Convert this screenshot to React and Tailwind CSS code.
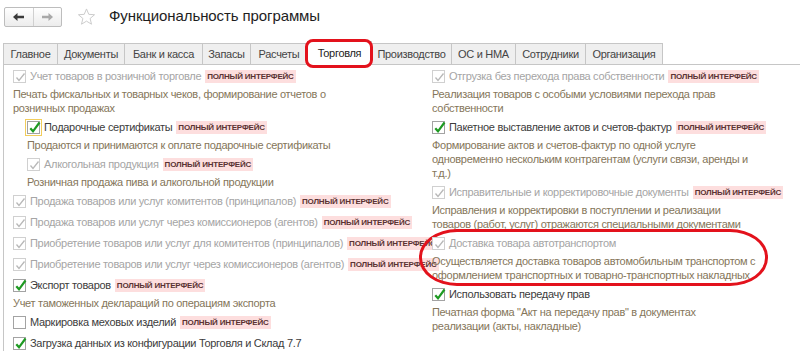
import React from "react";

const tabs = [
  { title: "Главное", w: 55 },
  { title: "Документы", w: 68 },
  { title: "Банк и касса", w: 79 },
  { title: "Запасы", w: 49 },
  { title: "Расчеты", w: 58 },
  { title: "Торговля", w: 65, active: true },
  { title: "Производство", w: 81 },
  { title: "ОС и НМА", w: 65 },
  { title: "Сотрудники", w: 71 },
  { title: "Организация", w: 78 },
];

// state: "disabled" | "on" | "off" | "focus"
const leftItems = [
  { state: "disabled", label: "Учет товаров в розничной торговле", badge: true, desc: "Печать фискальных и товарных чеков, формирование отчетов о розничных продажах" },
  { state: "focus", label: "Подарочные сертификаты", badge: true, indent: true, desc: "Продаются и принимаются к оплате подарочные сертификаты" },
  { state: "disabled", label: "Алкогольная продукция", badge: true, indent: true, desc: "Розничная продажа пива и алкогольной продукции" },
  { state: "disabled", label: "Продажа товаров или услуг комитентов (принципалов)", badge: true },
  { state: "disabled", label: "Продажа товаров или услуг через комиссионеров (агентов)", badge: true },
  { state: "disabled", label: "Приобретение товаров или услуг для комитентов (принципалов)", badge: true },
  { state: "disabled", label: "Приобретение товаров или услуг через комиссионеров (агентов)", badge: true },
  { state: "on", label: "Экспорт товаров", badge: true, desc: "Учет таможенных деклараций по операциям экспорта" },
  { state: "off", label: "Маркировка меховых изделий", badge: true },
  { state: "on", label: "Загрузка данных из конфигурации Торговля и Склад 7.7" },
];

const rightItems = [
  { state: "disabled", label: "Отгрузка без перехода права собственности", badge: true, desc: "Реализация товаров с особыми условиями перехода прав собственности" },
  { state: "on", label: "Пакетное выставление актов и счетов-фактур", badge: true, desc: "Формирование актов и счетов-фактур по одной услуге одновременно нескольким контрагентам (услуги связи, аренды и т.д.)" },
  { state: "disabled", label: "Исправительные и корректировочные документы", badge: true, desc: "Исправления и корректировки в поступлении и реализации товаров (работ, услуг) отражаются специальными документами" },
  { state: "disabled", label: "Доставка товара автотранспортом", marked: true, desc: "Осуществляется доставка товаров автомобильным транспортом с оформлением транспортных и товарно-транспортных накладных" },
  { state: "on", label: "Использовать передачу прав", narrow: true, desc: "Печатная форма \"Акт на передачу прав\" в документах реализации (акты, накладные)" },
];

function CheckBox({ state }) {
  const disabled = state === "disabled";
  const checked = state !== "off";
  return (
    <span
      className={
        "relative flex h-[13px] w-[13px] shrink-0 items-center justify-center border bg-white " +
        (disabled ? "border-[#d0d0d0]" : "border-[#a3a3a3]") +
        (state === "focus" ? " outline outline-[1.5px] outline-[#f2cd5c] outline-offset-[1px]" : "")
      }
    >
      {checked && (
        <svg width="13" height="13" viewBox="0 0 13 13" className="absolute left-0 top-0 overflow-visible">
          {disabled ? (
            <path d="M2.5 6.5 L5 9.5 L10.5 2.5" fill="none" stroke="#b8b8b8" strokeWidth="1.3" />
          ) : (
            <path d="M2.3 6.2 L5 9.3 L11.5 0.5" fill="none" stroke="#1e9a22" strokeWidth="2.2" />
          )}
        </svg>
      )}
    </span>
  );
}

function Badge() {
  return (
    <span className="ml-[4px] flex h-[13px] items-center bg-[#fddede] px-[2px] text-[8px] font-bold leading-none tracking-[-0.2px] text-[#5a3333]">
      ПОЛНЫЙ ИНТЕРФЕЙС
    </span>
  );
}

function Item({ item }) {
  const disabled = item.state === "disabled";
  return (
    <div className={(item.indent ? "pl-[14px] " : "") + (item.desc ? "pb-[2px] " : "") + "relative"}>
      {item.marked && (
        <div className="pointer-events-none absolute left-[-13px] top-[-4px] h-[57px] w-[349px] rounded-[38px/28px] border-[3px] border-[#e3121c]" />
      )}
      <div className="flex h-[21px] items-center whitespace-nowrap">
        <CheckBox state={item.state} />
        <span className={"ml-[4px] " + (disabled ? "text-[#a5a5a5]" : "text-[#3c3c3c]")}>{item.label}</span>
        {item.badge && <Badge />}
      </div>
      {item.desc && (
        <p className={(item.narrow ? "w-[300px]" : "w-[326px]") + " leading-[14px] text-[#85765a]"}>{item.desc}</p>
      )}
    </div>
  );
}

export default function App() {
  return (
    <div
      className="h-[351px] w-[800px] overflow-hidden bg-white text-[11px] tracking-[-0.3px]"
      style={{ fontFamily: '"Liberation Sans", Arial, sans-serif' }}
    >
      <header className="flex h-[33px] items-center pl-[4px]">
        <div className="flex h-[20px] w-[58px] overflow-hidden rounded-[2px] border border-[#bdbdbd] bg-gradient-to-b from-white to-[#ececec]">
          <button className="flex flex-1 items-center justify-center border-r border-[#d0d0d0]">
            <svg width="11" height="8" viewBox="0 0 11 8">
              <path d="M0 4 L4.5 0 V2.8 H11 V5.2 H4.5 V8 Z" fill="#3a3a3a" />
            </svg>
          </button>
          <button className="flex flex-1 items-center justify-center">
            <svg width="11" height="8" viewBox="0 0 11 8">
              <path d="M11 4 L6.5 0 V2.8 H0 V5.2 H6.5 V8 Z" fill="#a9a9a9" />
            </svg>
          </button>
        </div>
        <svg width="19" height="18" viewBox="0 0 24 23" className="ml-[15px]">
          <path
            d="M12 1.2 L14.9 8.1 L22.3 8.6 L16.6 13.4 L18.4 20.7 L12 16.8 L5.6 20.7 L7.4 13.4 L1.7 8.6 L9.1 8.1 Z"
            fill="none"
            stroke="#c9c9c9"
            strokeWidth="1.2"
            strokeLinejoin="round"
          />
        </svg>
        <h1 className="ml-[13px] text-[15px] tracking-[-0.1px] text-[#1e1e1e]">Функциональность программы</h1>
      </header>

      <nav className="mt-[8px] flex h-[23px] items-end pl-[3px]">
        {tabs.map((t) => (
          <div
            key={t.title}
            style={{ width: t.w }}
            className={
              "relative -ml-px flex items-center justify-center border border-b-0 border-[#c6c6c6] first:ml-0 " +
              (t.active ? "z-10 -mb-px h-[24px] bg-white text-[#222]" : "h-[21px] bg-[#efefef] text-[#444]")
            }
          >
            {t.title}
            {t.active && (
              <div className="pointer-events-none absolute left-[-3px] top-[-3px] h-[29px] w-[68px] rounded-[8px] border-[3px] border-[#e3121c]" />
            )}
          </div>
        ))}
      </nav>

      <main className="ml-[3px] grid h-full grid-cols-[428px_1fr] border-l border-t border-[#c6c6c6] pt-[1px]">
        <section className="pl-[9px]">
          {leftItems.map((it) => (
            <Item key={it.label} item={it} />
          ))}
        </section>
        <section>
          {rightItems.map((it) => (
            <Item key={it.label} item={it} />
          ))}
        </section>
      </main>
    </div>
  );
}
